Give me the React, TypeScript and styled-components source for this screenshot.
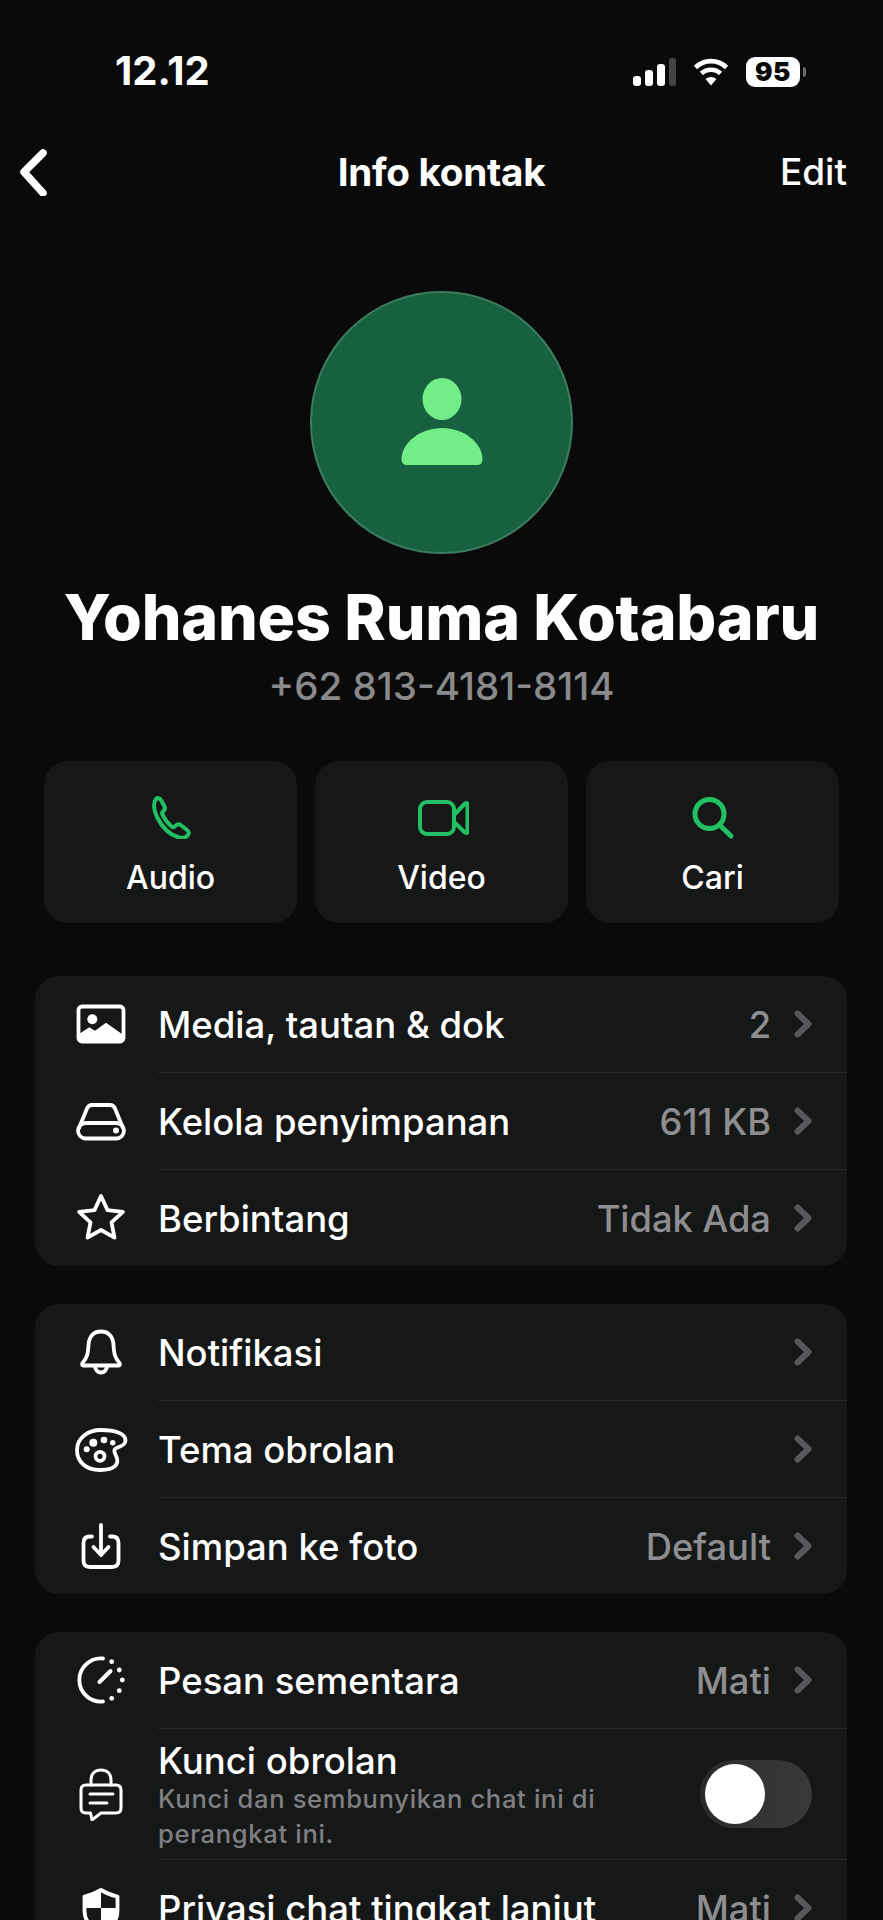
import React from "react";
import styled, { createGlobalStyle } from "styled-components";

const Global = createGlobalStyle`
  html, body { margin: 0; padding: 0; background: #0a0a0a; }
  body { font-family: Inter, "Liberation Sans", sans-serif; color: #fff; }
`;

const Page = styled.div`
  width: 883px;
  height: 1920px;
  overflow: hidden;
  background: #0a0a0a;
  padding-top: 48px;
  box-sizing: border-box;
`;

const StatusBar = styled.div`
  height: 48px;
  display: flex;
  align-items: center;
  justify-content: space-between;
  padding: 0 83px 0 115px;
`;

const Time = styled.div`
  font-size: 40px;
  font-weight: 700;
  line-height: 46px;
  margin-bottom: 2px;
`;

const StatusIcons = styled.div`
  display: flex;
  align-items: center;
  gap: 17px;
`;

const Battery = styled.div`
  position: relative;
  width: 54px;
  height: 30px;
  border-radius: 9px;
  background: #fff;
  color: #0a0a0a;
  font-size: 26px;
  font-weight: 900;
  line-height: 30px;
  text-align: center;
  letter-spacing: 0.5px;
  &::after {
    content: "";
    position: absolute;
    right: -6px;
    top: 10px;
    width: 3px;
    height: 10px;
    border-radius: 0 3px 3px 0;
    background: #6a6a6a;
  }
`;

const Nav = styled.div`
  margin-top: 52px;
  height: 48px;
  display: grid;
  grid-template-columns: 1fr auto 1fr;
  align-items: center;
  padding: 0 36px;
`;

const BackIcon = styled.svg`
  width: 36px;
  height: 48px;
  margin-left: -20px;
  display: block;
`;

const NavTitle = styled.div`
  font-size: 38.7px;
  font-weight: 700;
  letter-spacing: -0.3px;
  line-height: 48px;
`;

const EditLink = styled.div`
  justify-self: end;
  font-size: 37px;
  font-weight: 500;
  line-height: 48px;
`;

const Avatar = styled.div`
  margin: 95px auto 0;
  width: 263px;
  height: 263px;
  border-radius: 50%;
  background: #176040;
  border: 2px solid #3c7c5f;
  box-sizing: border-box;
  display: flex;
  align-items: center;
  justify-content: center;
`;

const AvatarGlyph = styled.svg`
  width: 90px;
  height: 90px;
  display: block;
`;

const ContactName = styled.h1`
  margin: 27px 0 0;
  font-size: 62.7px;
  font-weight: 800;
  line-height: 72px;
  text-align: center;
  letter-spacing: -0.2px;
`;

const Phone = styled.div`
  margin-top: 11px;
  font-size: 38.5px;
  font-weight: 500;
  line-height: 44px;
  text-align: center;
  color: #8a8a8d;
`;

const Actions = styled.div`
  margin: 53px 44px 0;
  display: grid;
  grid-template-columns: repeat(3, 1fr);
  gap: 18px;
`;

const ActionButton = styled.div`
  height: 162px;
  border-radius: 24px;
  background: #161818;
  display: flex;
  flex-direction: column;
  align-items: center;
  padding-top: 34px;
  box-sizing: border-box;
`;

const ActionIcon = styled.svg<{ $weight?: number }>`
  width: 54px;
  height: 44px;
  display: block;
  fill: none;
  stroke: #22c063;
  stroke-width: ${(p) => p.$weight ?? 4};
  stroke-linecap: round;
  stroke-linejoin: round;
`;

const ActionLabel = styled.div`
  margin-top: 19px;
  font-size: 32px;
  font-weight: 500;
  line-height: 40px;
`;

const Card = styled.section<{ $first?: boolean }>`
  margin: ${(p) => (p.$first ? "53px" : "38px")} 36px 0 35px;
  background: #161818;
  border-radius: 24px;
  overflow: hidden;
`;

const Row = styled.div<{ $tall?: boolean }>`
  height: ${(p) => (p.$tall ? "131px" : "97px")};
  display: flex;
  align-items: stretch;
  padding-left: 39px;
  &:first-child { height: 96px; }
`;

const RowIcon = styled.svg<{ $weight?: number }>`
  flex: 0 0 54px;
  width: 54px;
  height: 54px;
  align-self: center;
  margin-right: 30px;
  fill: none;
  stroke: #fff;
  stroke-width: ${(p) => p.$weight ?? 3.8};
  stroke-linecap: round;
  stroke-linejoin: round;
`;

const RowBody = styled.div<{ $divided?: boolean }>`
  flex: 1;
  min-width: 0;
  display: flex;
  align-items: center;
  padding-right: 35px;
  border-top: ${(p) => (p.$divided ? "1px solid #272929" : "none")};
`;

const RowText = styled.div`
  flex: 1;
  min-width: 0;
  padding-top: 2px;
`;

const RowTitle = styled.div`
  font-size: 36.5px;
  font-weight: 500;
  line-height: 44px;
  white-space: nowrap;
`;

const RowSub = styled.div`
  width: 470px;
  margin-top: -2px;
  font-size: 25.5px;
  font-weight: 500;
  line-height: 35px;
  letter-spacing: 0.7px;
  color: #7f7f82;
`;

const RowValue = styled.div`
  padding-top: 2px;
  font-size: 36.3px;
  font-weight: 500;
  line-height: 44px;
  color: #8e8e90;
  white-space: nowrap;
`;

const Chevron = styled.svg`
  width: 18px;
  height: 28px;
  margin-left: 23px;
  display: block;
  fill: none;
  stroke: #58585c;
  stroke-width: 6;
  stroke-linecap: round;
  stroke-linejoin: round;
`;

const Toggle = styled.div`
  position: relative;
  width: 112px;
  height: 68px;
  border-radius: 34px;
  background: linear-gradient(90deg, #29292b 0%, #333335 45%, #39393c 100%);
`;

const ToggleKnob = styled.div`
  position: absolute;
  left: 5px;
  top: 4px;
  width: 60px;
  height: 60px;
  border-radius: 50%;
  background: #fff;
`;

const Filled = styled.g`
  fill: #fff;
  stroke: none;
`;

const TimerHand = styled.path`
  stroke-width: 4;
`;

const Arrow = () => (
  <Chevron viewBox="0 0 18 28">
    <path d="M3.5 3.5 L14.5 14 L3.5 24.5" />
  </Chevron>
);

const MediaIcon = () => (
  <RowIcon viewBox="0 0 54 54">
    <rect x="4.5" y="9.5" width="45" height="35" rx="3.5" />
    <Filled>
      <circle cx="18.3" cy="22.3" r="5" />
      <path d="M5 37 L15.3 30.3 L21 33.7 L32 25.7 L48 37 V42 Q48 45 45 45 H9 Q5 45 5 42 Z" />
    </Filled>
  </RowIcon>
);

const DriveIcon = () => (
  <RowIcon viewBox="0 0 54 54">
    <path d="M5 34 L13 14.5 Q14.5 11 18 11 H36 Q39.5 11 41 14.5 L49 34" />
    <rect x="4" y="29" width="46" height="15.5" rx="7.7" />
    <Filled><circle cx="42" cy="36.5" r="3" /></Filled>
  </RowIcon>
);

const StarIcon = () => (
  <RowIcon viewBox="0 0 54 54">
    <polygon points="27,5 33.5,19.1 48.9,20.9 37.5,31.4 40.5,46.6 27,39 13.5,46.6 16.5,31.4 5.1,20.9 20.5,19.1" />
  </RowIcon>
);

const BellIcon = () => (
  <RowIcon viewBox="0 0 54 54">
    <path d="M27 6.5 C35 6.5 39 12 39.5 20 C40 29 41 33 45.5 38 Q46.5 40 45 40.5 H9 Q7.5 40 8.5 38 C13 33 14 29 14.5 20 C15 12 19 6.5 27 6.5 Z" />
    <path d="M21 41 a6 6.5 0 0 0 12 0" />
  </RowIcon>
);

const PaletteIcon = () => (
  <RowIcon viewBox="0 0 54 54">
    <path d="M27 8 C40 8 52 11 51.5 19 C51 25 44 24 41 27 C38 30 45 35 43 41 C41 47 33 48 26 48 C12 48 3 40 3 28 C3 16 14 8 27 8 Z" />
    <Filled>
      <circle cx="12.7" cy="27.3" r="3" />
      <circle cx="19.3" cy="20.7" r="4" />
      <circle cx="30" cy="18" r="3.3" />
      <circle cx="38.7" cy="20.7" r="2.7" />
    </Filled>
    <circle cx="26" cy="34.3" r="4.5" />
  </RowIcon>
);

const SaveIcon = () => (
  <RowIcon viewBox="0 0 54 54">
    <path d="M18 17.5 H16 Q9.5 17.5 9.5 24 V41.5 Q9.5 48 16 48 H38 Q44.5 48 44.5 41.5 V24 Q44.5 17.5 38 17.5 H36" />
    <path d="M27 6 V35" />
    <path d="M19.5 28 L27 36 L34.5 28" />
  </RowIcon>
);

const TimerIcon = () => (
  <RowIcon viewBox="0 0 54 54">
    <path d="M29 5.5 A21.6 21.6 0 1 0 29 48.5" />
    <TimerHand d="M25.5 29 L36.5 18" />
    <Filled>
      <circle cx="37.7" cy="8.7" r="2.4" />
      <circle cx="45.3" cy="17" r="2.4" />
      <circle cx="48.3" cy="27" r="2.4" />
      <circle cx="45.3" cy="37.7" r="2.4" />
      <circle cx="37.7" cy="45.3" r="2.4" />
    </Filled>
  </RowIcon>
);

const LockChatIcon = () => (
  <RowIcon viewBox="0 0 54 54" $weight={3}>
    <path d="M17 18 V13 C17 6.5 21 3 27 3 C33 3 37 6.5 37 13 V18" />
    <path d="M12 18 H42 Q47 18 47 23 V41 Q47 46 42 46 H27 L18 53 L16.5 46 H12 Q7 46 7 41 V23 Q7 18 12 18 Z" />
    <path d="M16 27 H39" />
    <path d="M16 36 H33" />
  </RowIcon>
);

const ShieldIcon = () => (
  <RowIcon viewBox="0 0 54 54">
    <path d="M27 9 C32 12 38 14.5 43.5 15.5 V30 C43.5 40 36 47 27 51 C18 47 10.5 40 10.5 30 V15.5 C16 14.5 22 12 27 9 Z" />
    <Filled>
      <path d="M27 8 V27 H10 V15 C16 14 22 11 27 8 Z" />
      <path d="M27 27 H44 V30 C44 40 36 47 27 51 Z" />
    </Filled>
  </RowIcon>
);

const App = () => (
  <Page>
    <Global />
    <StatusBar>
      <Time>12.12</Time>
      <StatusIcons>
        <svg width="43" height="28" viewBox="0 0 43 28">
          <rect x="0" y="18" width="8" height="10" rx="3" fill="#fff" />
          <rect x="12" y="12" width="8" height="16" rx="3" fill="#fff" />
          <rect x="24" y="6" width="8" height="22" rx="3" fill="#fff" />
          <rect x="36" y="0" width="7" height="28" rx="2.5" fill="#444" />
        </svg>
        <svg width="36" height="28" viewBox="0 0 36 28" fill="none" stroke="#fff" strokeWidth="4.6">
          <path d="M2.5 9.5 C11 1 25 1 33.5 9.5" />
          <path d="M8.5 15.5 C13.5 10.5 22.5 10.5 27.5 15.5" />
          <path d="M12.5 21 L18 27.5 L23.5 21 C20 18.2 16 18.2 12.5 21 Z" fill="#fff" stroke="none" />
        </svg>
        <Battery>95</Battery>
      </StatusIcons>
    </StatusBar>

    <Nav>
      <BackIcon viewBox="0 0 36 48" fill="none" stroke="#fff" strokeWidth="7.5" strokeLinecap="round" strokeLinejoin="round">
        <path d="M27 5 L8 24 L27 45" />
      </BackIcon>
      <NavTitle>Info kontak</NavTitle>
      <EditLink>Edit</EditLink>
    </Nav>

    <Avatar>
      <AvatarGlyph viewBox="0 0 90 90" fill="#72ed87">
        <ellipse cx="45" cy="21" rx="19.5" ry="21" />
        <path d="M4.5 81 C5 64 24 50 45 50 C66 50 85 64 85.5 81 Q85.5 87 80 87 H10 Q4.5 87 4.5 81 Z" />
      </AvatarGlyph>
    </Avatar>
    <ContactName>Yohanes Ruma Kotabaru</ContactName>
    <Phone>+62 813-4181-8114</Phone>

    <Actions>
      <ActionButton>
        <ActionIcon viewBox="0 0 54 44">
          <path d="M12 4 C13.5 2.5 16 3 17 5 L20.5 11.5 C21.3 13 21 14.5 20 15.5 L18.5 17 C18 17.7 18 18.7 18.5 19.7 C20.5 24 24 28.5 27.5 31.5 C28.5 32.3 29.5 32.4 30.3 31.8 L32.5 30 C33.8 29 35.3 29 36.6 30 L43 35 C45 36.5 45.3 38.5 44 40 C42 42.5 38.5 43.5 35 42.5 C26 40 18 32 13 22 C10 15 9 8 12 4 Z" />
        </ActionIcon>
        <ActionLabel>Audio</ActionLabel>
      </ActionButton>
      <ActionButton>
        <ActionIcon viewBox="0 0 54 44">
          <rect x="5" y="7" width="34" height="32" rx="7" />
          <path d="M39 20 L50 8.5 Q52.5 7 52.5 10 V36 Q52.5 39 50 37.5 L39 27" />
        </ActionIcon>
        <ActionLabel>Video</ActionLabel>
      </ActionButton>
      <ActionButton>
        <ActionIcon viewBox="0 0 54 44" $weight={5}>
          <circle cx="23.5" cy="19" r="14.5" />
          <path d="M33.5 30 L45 41" />
        </ActionIcon>
        <ActionLabel>Cari</ActionLabel>
      </ActionButton>
    </Actions>

    <Card $first>
      <Row>
        <MediaIcon />
        <RowBody>
          <RowText><RowTitle>Media, tautan &amp; dok</RowTitle></RowText>
          <RowValue>2</RowValue>
          <Arrow />
        </RowBody>
      </Row>
      <Row>
        <DriveIcon />
        <RowBody $divided>
          <RowText><RowTitle>Kelola penyimpanan</RowTitle></RowText>
          <RowValue>611 KB</RowValue>
          <Arrow />
        </RowBody>
      </Row>
      <Row>
        <StarIcon />
        <RowBody $divided>
          <RowText><RowTitle>Berbintang</RowTitle></RowText>
          <RowValue>Tidak Ada</RowValue>
          <Arrow />
        </RowBody>
      </Row>
    </Card>

    <Card>
      <Row>
        <BellIcon />
        <RowBody>
          <RowText><RowTitle>Notifikasi</RowTitle></RowText>
          <Arrow />
        </RowBody>
      </Row>
      <Row>
        <PaletteIcon />
        <RowBody $divided>
          <RowText><RowTitle>Tema obrolan</RowTitle></RowText>
          <Arrow />
        </RowBody>
      </Row>
      <Row>
        <SaveIcon />
        <RowBody $divided>
          <RowText><RowTitle>Simpan ke foto</RowTitle></RowText>
          <RowValue>Default</RowValue>
          <Arrow />
        </RowBody>
      </Row>
    </Card>

    <Card>
      <Row>
        <TimerIcon />
        <RowBody>
          <RowText><RowTitle>Pesan sementara</RowTitle></RowText>
          <RowValue>Mati</RowValue>
          <Arrow />
        </RowBody>
      </Row>
      <Row $tall>
        <LockChatIcon />
        <RowBody $divided>
          <RowText>
            <RowTitle>Kunci obrolan</RowTitle>
            <RowSub>Kunci dan sembunyikan chat ini di perangkat ini.</RowSub>
          </RowText>
          <Toggle><ToggleKnob /></Toggle>
        </RowBody>
      </Row>
      <Row>
        <ShieldIcon />
        <RowBody $divided>
          <RowText><RowTitle>Privasi chat tingkat lanjut</RowTitle></RowText>
          <RowValue>Mati</RowValue>
          <Arrow />
        </RowBody>
      </Row>
    </Card>
  </Page>
);

export default App;
